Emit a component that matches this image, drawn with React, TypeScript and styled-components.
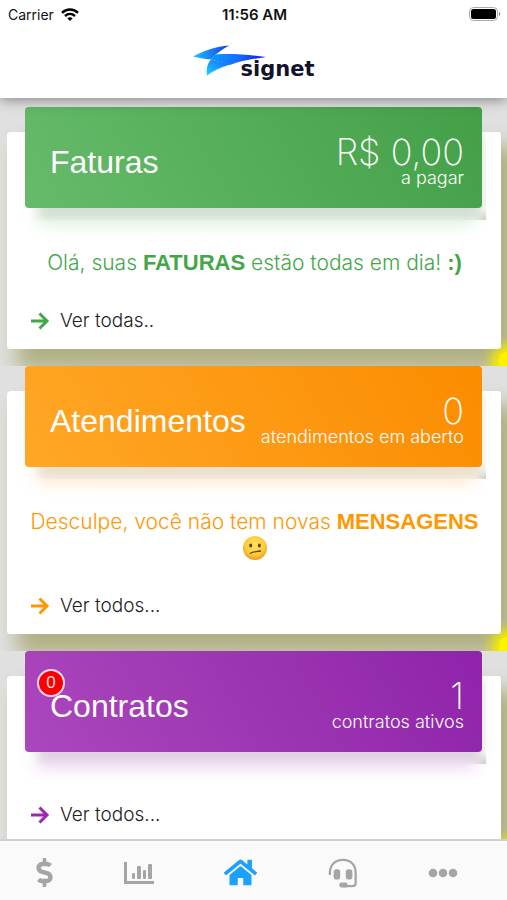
import React from "react";
import styled, { createGlobalStyle } from "styled-components";
import { FaDollarSign, FaHome } from "react-icons/fa";

const GlobalStyle = createGlobalStyle`
  *, *::before, *::after { box-sizing: border-box; }
  body {
    margin: 0;
    background: #e0e0e0;
    color: #222;
    font-family: "Liberation Sans", Arial, sans-serif;
  }
`;

const Screen = styled.div`
  display: flex;
  flex-direction: column;
  height: 100vh;
`;

const TopBar = styled.header`
  position: relative;
  z-index: 2;
  flex: none;
  background: #fff;
  box-shadow: 0 2px 12px rgba(0, 0, 0, 0.4);
`;

const StatusBar = styled.div`
  display: grid;
  grid-template-columns: 1fr auto 1fr;
  align-items: center;
  height: 28px;
  padding: 0 6px 0 8px;
  font-family: Inter, sans-serif;
  font-size: 14px;
  color: #111;
`;

const Carrier = styled.span`
  display: flex;
  align-items: center;
  gap: 7px;
`;

const Clock = styled.span`
  font-size: 15px;
  font-weight: 600;
`;

const Battery = styled.svg`
  justify-self: end;
`;

const Brand = styled.div`
  display: flex;
  justify-content: center;
  height: 70px;
  padding-top: 17px;
`;

const BrandMark = styled.svg`
  flex: none;
  margin-right: -26px;
`;

const BrandName = styled.span`
  padding-top: 14px;
  font-family: "DejaVu Sans", sans-serif;
  font-size: 21px;
  font-weight: 700;
  line-height: 20px;
  color: #12122c;
`;

const Feed = styled.main`
  flex: 1;
  min-height: 0;
  padding-top: 9px;
  overflow-y: auto;
  scrollbar-width: none;
`;

const Section = styled.section`
  position: relative;
  z-index: 0;
  padding: 25px 6px 17px 7px;
  overflow: hidden;

  &::before {
    content: "";
    position: absolute;
    z-index: -1;
    right: -16px;
    bottom: -16px;
    width: 24px;
    height: 30px;
    border-radius: 8px;
    background: #fff200;
    box-shadow: 0 0 12px 8px #f4ea00;
  }
`;

const Card = styled.div`
  display: flow-root;
  padding: 0 15px 15px 18px;
  border-radius: 4px;
  background: #fff;
`;

const CardShadow = styled.div`
  border-radius: 4px;

  position: relative;

  &::before {
    content: "";
    position: absolute;
    z-index: -2;
    inset: 0;
    box-shadow: 14px 18px 20px 4px #b1b084;
  }
`;

const BannerFrame = styled.div<{ $glow: string }>`
  margin-top: -25px;
  padding: 0 4px 12px 0;
  overflow: hidden;
  box-shadow: 0 14px 16px -12px ${(p) => p.$glow};
`;

const Banner = styled.div<{ $from: string; $to: string; $shade: string }>`
  position: relative;
  display: flex;
  align-items: center;
  justify-content: space-between;
  height: 101px;
  padding: 0 18px 0 25px;
  border-radius: 4px;
  background: linear-gradient(60deg, ${(p) => p.$from}, ${(p) => p.$to});
  color: #fff;
  box-shadow:
    454px 106px 8px -2px rgba(110, 115, 90, 0.4),
    6px 20px 12px -6px ${(p) => p.$shade};
`;

const Title = styled.h2`
  margin: 8px 0 0;
  font-size: 32px;
  font-weight: 400;
  line-height: 36px;
`;

const Total = styled.div`
  padding-top: 7px;
  text-align: right;
`;

const Amount = styled.div`
  font-family: Inter, sans-serif;
  font-size: 36px;
  font-weight: 200;
  line-height: 34px;
`;

const Caption = styled.div`
  font-family: Inter, sans-serif;
  font-size: 18px;
  font-weight: 300;
  line-height: 18px;
`;

const Badge = styled.span`
  position: absolute;
  top: 18px;
  left: 12px;
  width: 28px;
  height: 28px;
  border: 2px solid #f3d5ee;
  border-radius: 50%;
  background: #fa0000;
  color: #ffd9d9;
  font-size: 17px;
  line-height: 24px;
  text-align: center;
`;

const Message = styled.p<{ $color: string }>`
  margin: 30px -6px 0 -8px;
  color: ${(p) => p.$color};
  font-family: Inter, sans-serif;
  font-size: 21px;
  font-weight: 300;
  line-height: 26px;
  text-align: center;

  b {
    font-family: "Liberation Sans", Arial, sans-serif;
    font-size: 22px;
    font-weight: 700;
  }

  svg {
    vertical-align: top;
  }
`;

const MoreLink = styled.a<{ $spaced: boolean }>`
  display: flex;
  align-items: center;
  gap: 10px;
  width: fit-content;
  margin-top: ${(p) => (p.$spaced ? 32 : 38)}px;
  padding-left: 5px;
  color: #222;
  font-family: Inter, sans-serif;
  font-size: 19px;
  font-weight: 300;
  line-height: 26px;
  text-decoration: none;
`;

const TabBar = styled.nav`
  position: relative;
  z-index: 2;
  flex: none;
  display: flex;
  justify-content: space-between;
  height: 61px;
  padding: 0 49px 0 36px;
  border-top: 2px solid #cfcfcf;
  background: #fafafa;
`;

const Tab = styled.button<{ $active?: boolean }>`
  display: flex;
  align-items: center;
  justify-content: center;
  padding: 4px 0 0;
  border: 0;
  background: none;
  color: ${(p) => (p.$active ? "#1ea1fb" : "#a5a5a5")};
`;

const DollarIcon = styled(FaDollarSign)`
  width: 17px;
  height: 29px;
`;

const Arrow = ({ color }: { color: string }) => (
  <svg width="20" height="18" viewBox="0 0 20 18" fill="none" stroke={color} strokeWidth="3" aria-hidden="true">
    <path d="M1 9H17M9.500 1.500 17 9 9.500 16.500" />
  </svg>
);

const ConfusedFace = () => (
  <svg width="26" height="26" viewBox="0 0 26 26" role="img" aria-label="confuso">
    <defs>
      <radialGradient id="face" cx="50%" cy="38%" r="62%">
        <stop offset="0" stopColor="#ffe45c" />
        <stop offset="0.65" stopColor="#fdcb3c" />
        <stop offset="1" stopColor="#ee9a1c" />
      </radialGradient>
    </defs>
    <circle cx="13" cy="13" r="12" fill="url(#face)" />
    <ellipse cx="8.700" cy="10.500" rx="1.500" ry="2" fill="#6b3f0c" />
    <ellipse cx="17.300" cy="10.500" rx="1.500" ry="2" fill="#6b3f0c" />
    <path d="M8.500 18.300C11 16.300 14.500 17 18.500 16" fill="none" stroke="#6b3f0c" strokeWidth="1.400" strokeLinecap="round" />
  </svg>
);

type Panel = {
  title: string;
  amount: string;
  caption: string;
  from: string;
  to: string;
  shade: string;
  glow: string;
  accent: string;
  more: string;
  badge?: string;
  message?: React.ReactNode;
};

const panels: Panel[] = [
  {
    title: "Faturas",
    amount: "R$ 0,00",
    caption: "a pagar",
    from: "#66bb6a",
    to: "#43a047",
    shade: "#d3e0d2",
    glow: "rgba(76, 175, 80, 0.25)",
    accent: "#43a648",
    more: "Ver todas..",
    message: (
      <>
        Olá, suas <b>FATURAS</b> estão todas em dia! <b>:)</b>
      </>
    ),
  },
  {
    title: "Atendimentos",
    amount: "0",
    caption: "atendimentos em aberto",
    from: "#ffa726",
    to: "#fb8c00",
    shade: "#ebe0cd",
    glow: "rgba(255, 152, 0, 0.25)",
    accent: "#ff9800",
    more: "Ver todos...",
    message: (
      <>
        Desculpe, você não tem novas <b>MENSAGENS</b> <ConfusedFace />
      </>
    ),
  },
  {
    title: "Contratos",
    amount: "1",
    caption: "contratos ativos",
    from: "#ab47bc",
    to: "#8e24aa",
    shade: "#dfd2e1",
    glow: "rgba(156, 39, 176, 0.25)",
    accent: "#9c27b0",
    more: "Ver todos...",
    badge: "0",
  },
];

const PanelCard = ({ panel }: { panel: Panel }) => (
  <Section>
    <CardShadow>
      <Card>
        <BannerFrame $glow={panel.glow}>
          <Banner $from={panel.from} $to={panel.to} $shade={panel.shade}>
            <Title>{panel.title}</Title>
            {panel.badge && <Badge>{panel.badge}</Badge>}
            <Total>
              <Amount>{panel.amount}</Amount>
              <Caption>{panel.caption}</Caption>
            </Total>
          </Banner>
        </BannerFrame>
        {panel.message && <Message $color={panel.accent}>{panel.message}</Message>}
        <MoreLink href="#" $spaced={Boolean(panel.message)}>
          <Arrow color={panel.accent} />
          {panel.more}
        </MoreLink>
      </Card>
    </CardShadow>
  </Section>
);

export default function App() {
  return (
    <Screen>
      <GlobalStyle />
      <TopBar>
        <StatusBar>
          <Carrier>
            Carrier
            <svg width="18" height="13" viewBox="0 0 18 13" fill="none" stroke="#000" strokeWidth="2.400" aria-hidden="true">
              <path d="M1 4.800C5.500 0.300 12.500 0.300 17 4.800M4 8C7 5.200 11 5.200 14 8" />
              <path d="M6.300 10.200C8 8.800 10 8.800 11.700 10.200L9 13Z" fill="#000" stroke="none" />
            </svg>
          </Carrier>
          <Clock>11:56 AM</Clock>
          <Battery width="32" height="15" viewBox="0 0 32 15" aria-hidden="true">
            <rect x="0.500" y="0.500" width="28" height="13" rx="4" fill="#fff" stroke="#aaa" />
            <rect x="2" y="2" width="25" height="10" rx="2.500" fill="#000" />
            <path d="M30 5C31.600 5.400 31.600 8.600 30 9Z" fill="#888" />
          </Battery>
        </StatusBar>
        <Brand>
          <BrandMark width="74" height="32" viewBox="0 0 74 32" aria-hidden="true">
            <defs>
              <linearGradient id="wing" x1="0" x2="1">
                <stop offset="0" stopColor="#1cc8ff" />
                <stop offset="1" stopColor="#1a35e8" />
              </linearGradient>
              <linearGradient id="body" x1="0" x2="1">
                <stop offset="0" stopColor="#0a9bff" />
                <stop offset="0.500" stopColor="#146cff" />
                <stop offset="1" stopColor="#1a10e8" />
              </linearGradient>
              <linearGradient id="tail" x1="0" x2="1" y1="1" y2="0">
                <stop offset="0" stopColor="#1cd4ff" />
                <stop offset="1" stopColor="#1560f0" />
              </linearGradient>
            </defs>
            <path d="M0 11.500C12 5 23 1.500 36 0.500C30 4 26 7 22 10L18 14.500C12 14 6 13 0 11.500Z" fill="url(#wing)" />
            <path d="M22 9.500C38 8.500 55 9.500 73 12C60 14 46 16 37 20L18 14.500Z" fill="url(#body)" />
            <path d="M18 14.500 37 19.500C28 22 20 26 14 30.500C13 24 14.500 18 18 14.500Z" fill="url(#tail)" />
          </BrandMark>
          <BrandName>signet</BrandName>
        </Brand>
      </TopBar>
      <Feed>
        {panels.map((panel) => (
          <PanelCard key={panel.title} panel={panel} />
        ))}
      </Feed>
      <TabBar aria-label="Principal">
        <Tab aria-label="Faturas">
          <DollarIcon />
        </Tab>
        <Tab aria-label="Consumo">
          <svg width="30" height="24" viewBox="0 0 30 24" fill="currentColor" aria-hidden="true">
            <path d="M0 1H3V20H30V23H0Z" />
            <rect x="8" y="12" width="3" height="6" rx="1" />
            <rect x="13" y="5" width="4" height="13" rx="1" />
            <rect x="19" y="9" width="3" height="9" rx="1" />
            <rect x="24" y="3" width="4" height="15" rx="1" />
          </svg>
        </Tab>
        <Tab aria-label="Início" $active>
          <FaHome size={33} />
        </Tab>
        <Tab aria-label="Atendimento">
          <svg width="30" height="30" viewBox="0 0 32 32" fill="none" stroke="currentColor" aria-hidden="true">
            <path d="M2 18V16C2 7 8 2 16 2S29.500 7 29.500 16V26C29.500 28.500 28 30 25.500 30H16" strokeWidth="2.400" />
            <rect x="6" y="12" width="7" height="11" rx="3" fill="currentColor" stroke="none" />
            <rect x="19" y="12" width="7" height="11" rx="3" fill="currentColor" stroke="none" />
            <rect x="12" y="26" width="9" height="5.500" rx="2.700" fill="currentColor" stroke="none" />
          </svg>
        </Tab>
        <Tab aria-label="Mais">
          <svg width="30" height="10" viewBox="0 0 30 10" fill="currentColor" aria-hidden="true">
            <circle cx="5" cy="5" r="4.300" />
            <circle cx="15" cy="5" r="4.300" />
            <circle cx="25" cy="5" r="4.300" />
          </svg>
        </Tab>
      </TabBar>
    </Screen>
  );
}
